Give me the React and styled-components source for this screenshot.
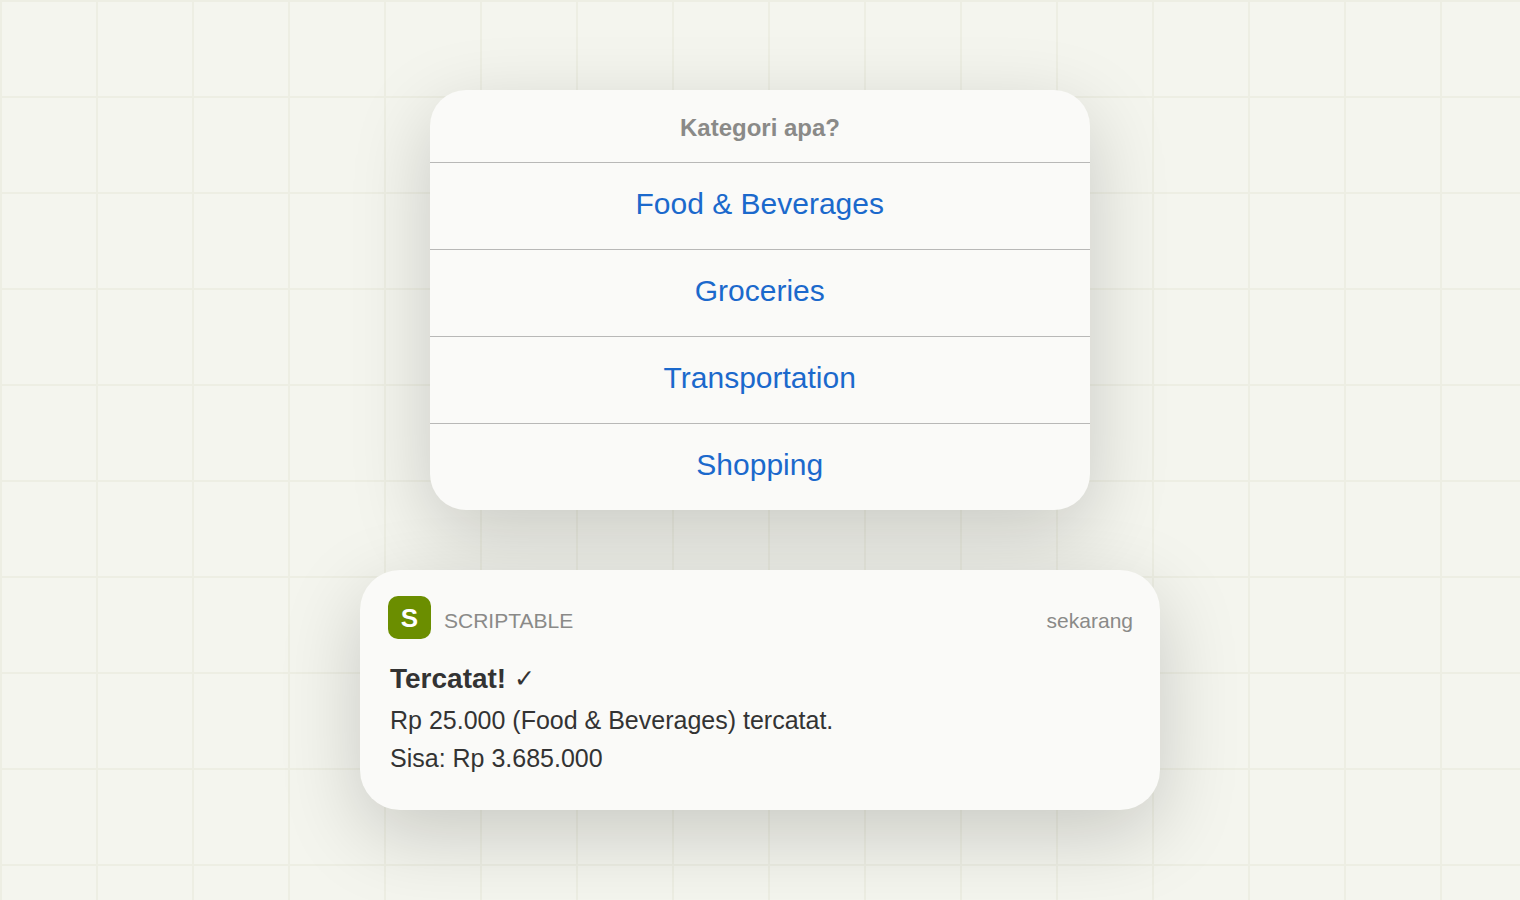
import styled, { createGlobalStyle } from "styled-components";

const categories = ["Food & Beverages", "Groceries", "Transportation", "Shopping"];

const App = () => {
    return (
        <>
            <GlobalStyle />
            <Page>
                <Menu>
                    <MenuTitle>Kategori apa?</MenuTitle>
                    {categories.map((category) => (
                        <MenuItem key={category}>{category}</MenuItem>
                    ))}
                </Menu>
                <Notification>
                    <NotificationHeader>
                        <AppIcon>S</AppIcon>
                        <AppName>SCRIPTABLE</AppName>
                        <Time>sekarang</Time>
                    </NotificationHeader>
                    <NotificationBody>
                        <Title>Tercatat! <Check>✓</Check></Title>
                        <Message>Rp 25.000 (Food & Beverages) tercatat.</Message>
                        <Message>Sisa: Rp 3.685.000</Message>
                    </NotificationBody>
                </Notification>
            </Page>
        </>
    );
}

const GlobalStyle = createGlobalStyle`
    * {
        box-sizing: border-box;
    }

    body {
        margin: 0;
        font-family: "Liberation Sans", Arial, sans-serif;
    }
`;

const Page = styled.main`
    display: flex;
    flex-direction: column;
    align-items: center;
    gap: 60px;
    height: 900px;
    padding-top: 90px;
    overflow: hidden;
    background-color: #f4f5ee;
    background-image:
        linear-gradient(#edeee3 2px, transparent 2px),
        linear-gradient(90deg, #edeee3 2px, transparent 2px);
    background-size: 96px 96px;
`;

const Menu = styled.section`
    flex: none;
    width: 660px;
    height: 420px;
    overflow: hidden;
    border-radius: 36px;
    background: #fafaf8;
    box-shadow: 0 24px 80px rgba(0, 0, 0, 0.18);
    text-align: center;
`;

const MenuTitle = styled.h2`
    height: 72px;
    margin: 0;
    padding-top: 2px;
    color: #8a8a88;
    font-size: 24px;
    line-height: 72px;
`;

const MenuItem = styled.div`
    height: 87px;
    padding-right: 0.5px;
    border-top: 1px solid #b8b8b7;
    color: #1b69cc;
    font-size: 30px;
    line-height: 81px;
`;

const Notification = styled.section`
    flex: none;
    width: 800px;
    height: 240px;
    padding: 26px 27px 26px 28px;
    border-radius: 40px;
    background: #fafaf8;
    box-shadow: 0 24px 80px rgba(0, 0, 0, 0.18);
`;

const NotificationHeader = styled.header`
    display: flex;
    align-items: center;
    height: 43px;
    color: #8a8a88;
    font-size: 21px;
`;

const AppIcon = styled.div`
    width: 43px;
    height: 43px;
    margin-right: 13px;
    border-radius: 10px;
    background: #6b8e00;
    color: #ffffff;
    font-size: 26px;
    font-weight: 700;
    line-height: 44px;
    text-align: center;
`;

const AppName = styled.span`
    padding-top: 6px;
`;

const Time = styled.span`
    margin-left: auto;
    padding-top: 6px;
`;

const NotificationBody = styled.div`
    padding: 20px 2px 0;
    color: #333333;
`;

const Title = styled.h3`
    height: 40px;
    margin: 0 0 2px;
    font-size: 28px;
    line-height: 40px;
`;

const Check = styled.span`
    font-size: 25px;
    font-weight: 400;
    line-height: 1;
    vertical-align: 1px;
`;

const Message = styled.p`
    margin: 0;
    font-size: 25px;
    line-height: 38px;
`;

export default App;
